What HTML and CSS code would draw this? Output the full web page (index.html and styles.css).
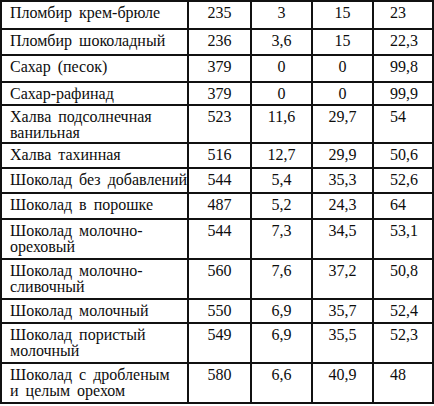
FILE: index.html
```html
<!DOCTYPE html>
<html lang="ru">
<head>
<meta charset="utf-8">
<title>Таблица</title>
<link rel="stylesheet" href="styles.css">
</head>
<body>
<div class="table">
  <div class="name">Пломбир крем-брюле</div><div class="num">235</div><div class="num">3</div><div class="num">15</div><div class="num last">23</div>
  <div class="name">Пломбир шоколадный</div><div class="num">236</div><div class="num">3,6</div><div class="num">15</div><div class="num last">22,3</div>
  <div class="name">Сахар (песок)</div><div class="num">379</div><div class="num">0</div><div class="num">0</div><div class="num last">99,8</div>
  <div class="name">Сахар-рафинад</div><div class="num">379</div><div class="num">0</div><div class="num">0</div><div class="num last">99,9</div>
  <div class="name">Халва подсолнечная<br>ванильная</div><div class="num">523</div><div class="num">11,6</div><div class="num">29,7</div><div class="num last">54</div>
  <div class="name">Халва тахинная</div><div class="num">516</div><div class="num">12,7</div><div class="num">29,9</div><div class="num last">50,6</div>
  <div class="name">Шоколад без добавлений</div><div class="num">544</div><div class="num">5,4</div><div class="num">35,3</div><div class="num last">52,6</div>
  <div class="name">Шоколад в порошке</div><div class="num">487</div><div class="num">5,2</div><div class="num">24,3</div><div class="num last">64</div>
  <div class="name">Шоколад молочно-<br>ореховый</div><div class="num">544</div><div class="num">7,3</div><div class="num">34,5</div><div class="num last">53,1</div>
  <div class="name">Шоколад молочно-<br>сливочный</div><div class="num">560</div><div class="num">7,6</div><div class="num">37,2</div><div class="num last">50,8</div>
  <div class="name">Шоколад молочный</div><div class="num">550</div><div class="num">6,9</div><div class="num">35,7</div><div class="num last">52,4</div>
  <div class="name">Шоколад пористый<br>молочный</div><div class="num">549</div><div class="num">6,9</div><div class="num">35,5</div><div class="num last">52,3</div>
  <div class="name">Шоколад с дробленым<br>и целым орехом</div><div class="num">580</div><div class="num">6,6</div><div class="num">40,9</div><div class="num last">48</div>
</div>
</body>
</html>
```

FILE: styles.css
```css
html, body {
  margin: 0;
  padding: 0;
  background: #ffffff;
}

body {
  font-family: "Liberation Serif", "Times New Roman", serif;
  font-size: 16px;
  color: #0d0d0d;
}

.table {
  display: grid;
  width: 434px;
  box-sizing: border-box;
  padding: 2px;
  gap: 2px;
  background: #111111;
  grid-template-columns: 185px 61px 59px 59px 58px;
  grid-template-rows: 26px 24px 25px 21px 36px 23px 23px 24px 38px 38px 22px 38px 38px;
}

.name,
.num {
  background: #ffffff;
  line-height: 16px;
  padding-top: 3px;
  white-space: nowrap;
  overflow: hidden;
}

.name {
  padding-left: 8px;
  word-spacing: 3px;
}

.num {
  text-align: center;
}

.num.last {
  text-align: left;
  padding-left: 16px;
}
```
